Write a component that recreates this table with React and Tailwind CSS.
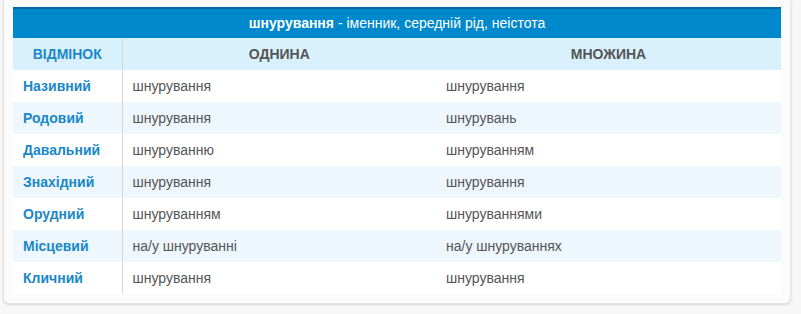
import React from "react";

const rows = [
  ["Називний", "шнурування", "шнурування"],
  ["Родовий", "шнурування", "шнурувань"],
  ["Давальний", "шнуруванню", "шнуруванням"],
  ["Знахідний", "шнурування", "шнурування"],
  ["Орудний", "шнуруванням", "шнуруваннями"],
  ["Місцевий", "на/у шнуруванні", "на/у шнуруваннях"],
  ["Кличний", "шнурування", "шнурування"],
];

const App = () => {
  return (
    <div
      className="min-h-[314px] bg-[#f7f7f7] pl-[3px] pr-[10px]"
      style={{ fontFamily: '"Liberation Sans", Arial, sans-serif' }}
    >
      <div className="bg-[#fbfbfb] border border-t-0 border-[#e2e2e2] rounded-b-md shadow-sm px-[9px] pt-[7px] pb-[9px]">
        <table className="w-full border-collapse bg-white text-[14px]">
          <thead>
            <tr>
              <th
                colSpan={3}
                className="h-[30px] bg-[#0088cc] border-t-2 border-[#006a9c] text-white text-[14px] font-normal text-center"
              >
                <span className="font-bold">шнурування</span> - іменник,
                середній рід, неістота
              </th>
            </tr>
            <tr className="bg-[#d9f1fd] h-[32px] text-[14px]">
              <th className="w-[109px] border-r border-[#d6d6d6] text-[#1a87c7] font-bold">
                ВІДМІНОК
              </th>
              <th className="w-[314px] text-[#555] font-bold">ОДНИНА</th>
              <th className="text-[#555] font-bold">МНОЖИНА</th>
            </tr>
          </thead>
          <tbody>
            {rows.map((r, i) => (
              <tr
                key={r[0]}
                className={`h-[32px] ${i % 2 ? "bg-[#eef7fe]" : "bg-white"}`}
              >
                <td className="pl-[10px] border-r border-[#d6d6d6] font-bold text-[#1a87c7]">
                  {r[0]}
                </td>
                <td className="pl-[10px] text-[#555]">{r[1]}</td>
                <td className="pl-[10px] text-[#555]">{r[2]}</td>
              </tr>
            ))}
          </tbody>
        </table>
      </div>
    </div>
  );
};

export default App;
